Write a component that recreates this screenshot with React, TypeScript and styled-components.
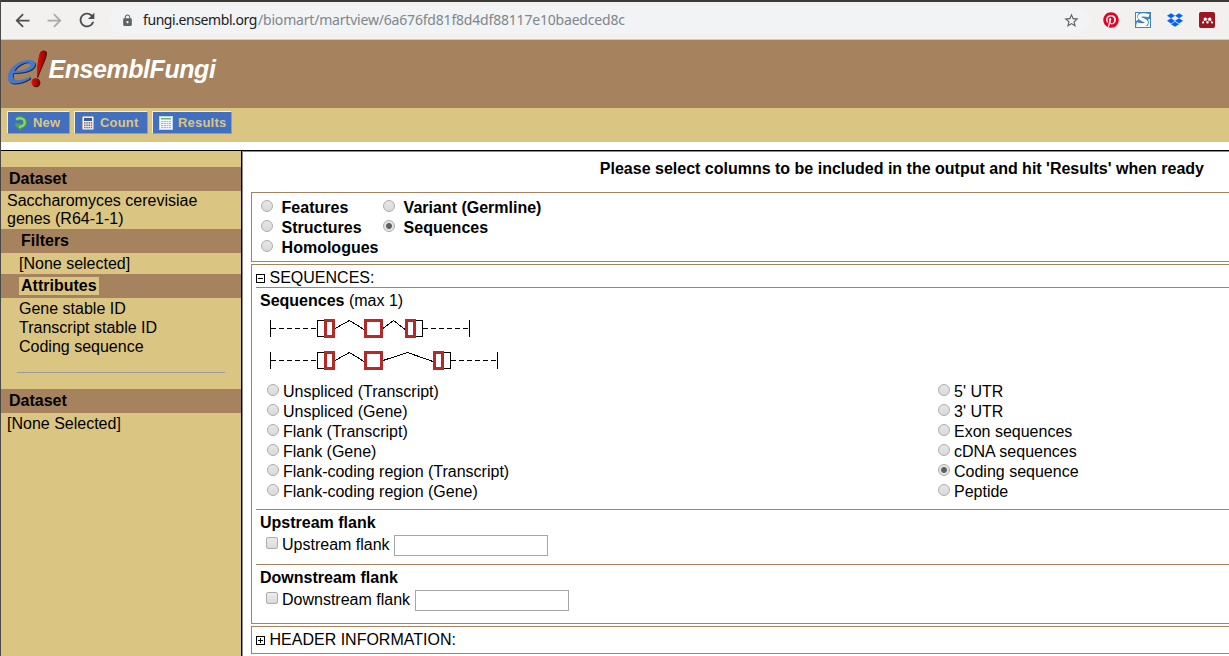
import React from "react";
import styled, { createGlobalStyle } from "styled-components";
import { MdArrowBack, MdArrowForward, MdRefresh, MdLock, MdStarBorder } from "react-icons/md";
import { FaPinterest, FaDropbox, FaMendeley } from "react-icons/fa";

const brown = "#a6835e";
const sand = "#dbc583";

const Global = createGlobalStyle`
  * { box-sizing: border-box; }
  body { margin: 0; background: #fff; overflow: hidden; }
`;

const Page = styled.div`
  width: 1229px;
  height: 656px;
  overflow: hidden;
  display: flex;
  flex-direction: column;
  border-left: 1px solid #4a4945;
  background: #fff;
  color: #000;
  font: 16px/18px "Liberation Sans", Arial, sans-serif;
  white-space: nowrap;
`;

const BrowserBar = styled.div`
  flex: none;
  height: 40px;
  display: flex;
  align-items: center;
  padding-bottom: 1px;
  border-top: 2px solid #3c3b37;
  border-bottom: 1px solid #cfcdca;
  background: #f2f1f0;
  color: #4c4d50;
`;

const NavIcons = styled.div`
  display: flex;
  align-items: center;
  gap: 11px;
  width: 109px;
  padding-left: 11px;
  svg { flex: none; }
  svg:nth-child(2) { color: #a9a9a9; }
`;

const Omnibox = styled.div`
  width: 979px;
  height: 28px;
  padding: 0 9.5px 0 10.5px;
  border-radius: 14px;
  display: flex;
  align-items: center;
  background: #f1f3f4;
  color: #5f6368;
`;

const Url = styled.div`
  flex: 1;
  margin-left: 9.5px;
  font: 14px/20px "Noto Sans", sans-serif;
  color: #80868b;
`;

const Host = styled.span`
  display: inline-block;
  width: 115px;
  letter-spacing: -0.42px;
  color: #202124;
`;

const Path = styled.span`
  letter-spacing: -0.19px;
`;

const Extensions = styled.div`
  display: flex;
  align-items: center;
  gap: 16px;
  margin-left: 14px;
`;

const MendeleyBadge = styled.span`
  width: 16px;
  height: 16px;
  border-radius: 2px;
  display: flex;
  align-items: center;
  justify-content: center;
  background: #9d1620;
  color: #fff;
`;

const Header = styled.header`
  flex: none;
  height: 68px;
  display: flex;
  align-items: flex-start;
  padding: 9px 0 0 4px;
  background: ${brown};
`;

const Brand = styled.div`
  margin: 5px 0 0 1.5px;
  font-size: 25px;
  font-weight: bold;
  font-style: italic;
  line-height: 30px;
  letter-spacing: -0.44px;
  color: #fff;
`;

const Toolbar = styled.div`
  flex: none;
  height: 34px;
  display: flex;
  align-items: flex-start;
  gap: 4px;
  padding: 3px 0 0 6px;
  background: ${sand};
`;

const ToolButton = styled.button<{ $width: number }>`
  width: ${(p) => p.$width}px;
  height: 23px;
  padding: 0 0 0 6px;
  display: flex;
  align-items: center;
  gap: 5px;
  border: 1px solid;
  border-color: #f4eed8 #9d9a9a #9d9a9a #f4eed8;
  background: #436fc0;
  color: ${sand};
  font: bold 13px/16px "Liberation Sans", Arial, sans-serif;
  letter-spacing: 0.2px;
  svg { flex: none; }
`;

const Body = styled.div`
  flex: 1;
  min-height: 0;
  display: flex;
  margin-top: 8px;
  border-top: 1px solid #000;
`;

const Sidebar = styled.aside`
  flex: none;
  width: 241px;
  padding-top: 16px;
  border-right: 1px solid #000;
  background: ${sand};
`;

const SideHeading = styled.div<{ $nested?: boolean }>`
  height: 24px;
  padding-left: ${(p) => (p.$nested ? 18 : 8)}px;
  display: flex;
  align-items: center;
  background: ${brown};
  font-weight: bold;
`;

const HeadingLabel = styled.span<{ $active?: boolean }>`
  height: 18px;
  line-height: 18px;
  padding: 0 2px;
  background: ${(p) => (p.$active ? sand : "transparent")};
`;

const SideTitle = styled.span`
  line-height: 24px;
`;

const SideValue = styled.div`
  padding: 1px 0 1px 6px;
`;

const SideEmpty = styled(SideValue)`
  padding-top: 2px;
`;

const SideItem = styled.div<{ $height: number }>`
  height: ${(p) => p.$height}px;
  line-height: ${(p) => p.$height}px;
  padding-left: 18px;
`;

const SideRule = styled.div`
  width: 208px;
  height: 1px;
  margin: 16px 0 16px 16px;
  background: #9b9b9b;
`;

const SideList = styled.div`
  padding-top: 1px;
`;

const Main = styled.main`
  flex: 1;
  min-width: 0;
  border-left: 1px solid #8c8c8c;
  border-top: 1px solid #8c8c8c;
  padding-left: 8px;
`;

const Hint = styled.div`
  height: 40px;
  padding: 8px 25px 0 0;
  text-align: right;
  font-weight: bold;
`;

const Panel = styled.section<{ $height: number }>`
  height: ${(p) => p.$height}px;
  margin-bottom: 2px;
  border: 1px solid ${brown};
  border-right: 0;
  padding-left: 4px;
`;

const PageTypes = styled.div`
  display: grid;
  grid-template-columns: 122px auto;
  grid-auto-rows: 20px;
  justify-content: start;
  padding: 4px 0 0 5px;
  font-weight: bold;
`;

const Option = styled.label<{ $gap: number }>`
  height: 20px;
  display: flex;
  align-items: flex-start;
  gap: ${(p) => p.$gap}px;
  line-height: 22px;
`;

const Radio = styled.input.attrs({ type: "radio", readOnly: true })`
  appearance: none;
  flex: none;
  width: 12px;
  height: 12px;
  margin: 3px 0 0;
  border: 1px solid #adadad;
  border-radius: 50%;
  background: linear-gradient(#e6e6e6, #dadada);
  &:checked {
    background: radial-gradient(circle, #606060 0 2.5px, #e4e4e4 3.4px);
  }
`;

const Checkbox = styled.input.attrs({ type: "checkbox" })`
  appearance: none;
  flex: none;
  width: 12px;
  height: 12px;
  margin: 2px 4px 0 0;
  border: 1px solid #adadad;
  border-radius: 2px;
  background: linear-gradient(#ececec, #dadada);
`;

const PanelTitle = styled.div<{ $ruled?: boolean }>`
  height: 23px;
  display: flex;
  align-items: flex-start;
  gap: 4.5px;
  border-bottom: ${(p) => (p.$ruled ? `1px solid ${brown}` : "0")};
  line-height: 26px;
`;

const ToggleIcon = styled.svg`
  margin-top: 9px;
`;

const SequenceBlock = styled.div`
  height: 222px;
  padding: 4px 0 0 4px;
  border-bottom: 1px solid ${brown};
`;

const Diagram = styled.svg`
  display: block;
  margin: 5px 0 6px;
`;

const SequenceTypes = styled.div`
  display: grid;
  grid-template-columns: 671px auto;
  justify-content: start;
  padding-left: 7px;
`;

const Flank = styled.div<{ $ruled?: boolean }>`
  height: 55px;
  padding: 4px 0 0 4px;
  border-bottom: ${(p) => (p.$ruled ? `1px solid ${brown}` : "0")};
`;

const FlankRow = styled.label`
  height: 21px;
  margin-top: 3px;
  padding-left: 6px;
  display: flex;
  align-items: flex-start;
  line-height: 20px;
`;

const TextField = styled.input<{ $gap: number }>`
  width: 154px;
  height: 21px;
  margin-left: ${(p) => p.$gap}px;
  padding: 0 4px;
  border: 1px solid #a6a6a6;
  background: #fff;
`;

function EnsemblMark() {
  const letter =
    "M2.800 28C3.500 18.500 14 11 24 11C29.500 11 31.500 14 29.300 17.800C26.500 22.300 17 24.200 8.300 24.200C7 29 9 31.800 14 31.200C18 30.700 22 29.200 25 27.300C25.500 28.300 25.500 28.800 25 29.600C20 33 14 34.700 9.500 34.600C5 34.400 2.500 32 2.800 28ZM9.300 21.900C17 21.600 24.300 19.700 25.300 16.200C26 13 22 12.800 18.500 14.300C14 16 11 19 9.300 21.900Z";
  return (
    <svg width="42" height="40" viewBox="0 0 42 40">
      <defs>
        <linearGradient id="red" x1="0" x2="1">
          <stop offset="0" stopColor="#e01010" />
          <stop offset="1" stopColor="#8d0000" />
        </linearGradient>
      </defs>
      <g fillRule="evenodd">
        <path d={letter} fill="#1f3050" transform="translate(.9 .9)" />
        <path d={letter} fill="#4678cc" />
      </g>
      <path d="M35 4.500C36.500 .8 42.500 .5 42 5C41.500 10 36.500 19 33.300 28.500H32C32.200 19 33 11 35 4.500Z" fill="#3c1510" />
      <path d="M34.800 4.200C36.300 .5 41.500 .5 41 4.500C40.500 10 35.500 19 32.600 27.500H31.900C31.900 19 32.500 11 34.800 4.200Z" fill="url(#red)" />
      <circle cx="31.200" cy="34" r="4.200" fill="#3c1510" />
      <circle cx="30.600" cy="33.300" r="4.100" fill="url(#red)" />
    </svg>
  );
}

function NewIcon() {
  return (
    <svg width="14" height="16" viewBox="0 0 14 16">
      <path d="M2 4.500C4.500 1.800 11.200 2.600 11.100 7.600C11 10.300 8.500 11.800 5.500 11.900" fill="none" stroke="#3f9a45" strokeWidth="4.200" />
      <path d="M.6 8.300H6.800V10.300H5L6.800 12V15.800L1.200 10.800Z" fill="#4ea64b" />
      <path d="M2.200 4.500C4.800 2.300 10.900 3 10.700 7.600C10.500 10 8 11.600 5 11.800" fill="none" stroke="#8fd07f" strokeWidth="2.300" />
    </svg>
  );
}

function CountIcon() {
  return (
    <svg width="14" height="16" viewBox="0 0 14 16">
      <rect x="1.500" y="1.500" width="11" height="13" rx="1" fill="#f3f1ef" stroke="#b8b4b2" />
      <rect x="3" y="3" width="8" height="3" fill="#365d9b" />
      {[7.2, 9.5, 11.8].map((y) =>
        [3.1, 5.3, 7.5, 9.7].map((x) => (
          <rect key={`${x}-${y}`} x={x} y={y} width="1.500" height="1.500" fill={x > 9 && y < 8 ? "#c8503e" : "#777"} />
        ))
      )}
    </svg>
  );
}

function ResultsIcon() {
  return (
    <svg width="14" height="16" viewBox="0 0 14 16">
      <rect x=".5" y="1.500" width="13" height="13" fill="#fff" stroke="#b9d9f7" />
      <rect x="2" y="3" width="10" height="1.500" fill="#69b667" />
      {[6, 8, 10, 12].map((y) =>
        [2, 5, 7.5, 10].map((x) => (
          <rect key={`${x}-${y}`} x={x} y={y} width={x === 2 ? 2.5 : 2} height="1.200" fill="#94bbed" />
        ))
      )}
    </svg>
  );
}

function StylishIcon() {
  return (
    <svg width="16" height="16" viewBox="0 0 16 16">
      <rect width="16" height="16" fill="#3f86b5" />
      <path d="M1 1H4C1.800 2.500 1.800 6 3.500 7.500L1 9ZM1 14H15V15H1ZM13 7.500L15 7V15H11C14 13.500 14.500 10 13 7.500Z" fill="#fff" />
      <path d="M14 3.800C10 2.300 4.500 2.300 4.500 4.900C4.500 7.900 11.300 7.300 11.300 10.600C11.300 13.600 5.500 13.300 1.500 11.900" fill="none" stroke="#fff" strokeWidth="3.300" />
    </svg>
  );
}

function Toggle({ open }: { open?: boolean }) {
  return (
    <ToggleIcon width="9" height="9" viewBox="0 0 9 9" shapeRendering="crispEdges">
      <rect x=".5" y=".5" width="8" height="8" fill="#fff" stroke="#000" />
      <path d={open ? "M2 4.500H7" : "M2 4.500H7M4.500 2V7"} stroke="#000" />
    </ToggleIcon>
  );
}

/* One transcript: x positions are relative to the left edge of the drawing. */
function Transcript({ y, last }: { y: number; last: number }) {
  const mid = Math.round((123 + last) / 2) - 1;
  return (
    <g transform={`translate(0 ${y})`} fill="none" stroke="#000">
      <g shapeRendering="crispEdges">
        <path d={`M10.500 1V18M${last + 64.5} 1V18`} />
        <path d={`M11 9.500H57M${last + 18} 9.500H${last + 64}`} strokeDasharray="5 3" />
        <rect x="57.500" y="1.500" width="10" height="16" />
        <rect x={last + 7.5} y="1.500" width="10" height="16" />
        <path d={`M75 9.500L89.500 1.500L104 10.500M123 9.500L${mid + 0.5} 1.500L${last} 10.500`} />
      </g>
      <g fill="#fff" stroke="#b22a2a" strokeWidth="3" shapeRendering="crispEdges">
        <rect x="65.500" y="1.500" width="8" height="16" />
        <rect x="105.500" y="1.500" width="16" height="16" />
        <rect x={last + 1.5} y="1.500" width="8" height="16" />
      </g>
    </g>
  );
}

const pageTypes = ["Features", "Variant (Germline)", "Structures", "Sequences", "Homologues"];

const sequenceTypes = [
  "Unspliced (Transcript)", "5' UTR",
  "Unspliced (Gene)", "3' UTR",
  "Flank (Transcript)", "Exon sequences",
  "Flank (Gene)", "cDNA sequences",
  "Flank-coding region (Transcript)", "Coding sequence",
  "Flank-coding region (Gene)", "Peptide",
];

export default function App() {
  return (
    <Page>
      <Global />
      <BrowserBar>
        <NavIcons>
          <MdArrowBack size={21} />
          <MdArrowForward size={21} />
          <MdRefresh size={22} />
        </NavIcons>
        <Omnibox>
          <MdLock size={13} />
          <Url>
            <Host>fungi.ensembl.org</Host>
            <Path>/biomart/martview/6a676fd81f8d4df88117e10baedced8c</Path>
          </Url>
          <MdStarBorder size={17} />
        </Omnibox>
        <Extensions>
          <FaPinterest size={16} color="#e60023" />
          <StylishIcon />
          <FaDropbox size={16} color="#0061ff" />
          <MendeleyBadge>
            <FaMendeley size={11} />
          </MendeleyBadge>
        </Extensions>
      </BrowserBar>

      <Header>
        <EnsemblMark />
        <Brand>EnsemblFungi</Brand>
      </Header>

      <Toolbar>
        <ToolButton $width={63}><NewIcon />New</ToolButton>
        <ToolButton $width={74}><CountIcon />Count</ToolButton>
        <ToolButton $width={80}><ResultsIcon />Results</ToolButton>
      </Toolbar>

      <Body>
        <Sidebar>
          <SideHeading><SideTitle>Dataset</SideTitle></SideHeading>
          <SideValue>Saccharomyces cerevisiae<br />genes (R64-1-1)</SideValue>
          <SideHeading $nested><HeadingLabel>Filters</HeadingLabel></SideHeading>
          <SideItem $height={21}>[None selected]</SideItem>
          <SideHeading $nested><HeadingLabel $active>Attributes</HeadingLabel></SideHeading>
          <SideList>
            <SideItem $height={19}>Gene stable ID</SideItem>
            <SideItem $height={19}>Transcript stable ID</SideItem>
            <SideItem $height={19}>Coding sequence</SideItem>
          </SideList>
          <SideRule />
          <SideHeading><SideTitle>Dataset</SideTitle></SideHeading>
          <SideEmpty>[None Selected]</SideEmpty>
        </Sidebar>

        <Main>
          <Hint>Please select columns to be included in the output and hit 'Results' when ready</Hint>

          <Panel $height={70}>
            <PageTypes>
              {pageTypes.map((name) => (
                <Option key={name} $gap={8.6}>
                  <Radio name="page" checked={name === "Sequences"} />
                  {name}
                </Option>
              ))}
            </PageTypes>
          </Panel>

          <Panel $height={360}>
            <PanelTitle $ruled><Toggle open />SEQUENCES:</PanelTitle>
            <SequenceBlock>
              <div><b>Sequences</b> (max 1)</div>
              <Diagram width="250" height="60" viewBox="0 0 250 60">
                <Transcript y={4} last={145} />
                <Transcript y={36} last={173} />
              </Diagram>
              <SequenceTypes>
                {sequenceTypes.map((name) => (
                  <Option key={name} $gap={4}>
                    <Radio name="sequence" checked={name === "Coding sequence"} />
                    {name}
                  </Option>
                ))}
              </SequenceTypes>
            </SequenceBlock>
            <Flank $ruled>
              <b>Upstream flank</b>
              <FlankRow><Checkbox />Upstream flank<TextField $gap={4.4} /></FlankRow>
            </Flank>
            <Flank>
              <b>Downstream flank</b>
              <FlankRow><Checkbox />Downstream flank<TextField $gap={5} /></FlankRow>
            </Flank>
          </Panel>

          <Panel $height={28}>
            <PanelTitle><Toggle />HEADER INFORMATION:</PanelTitle>
          </Panel>
        </Main>
      </Body>
    </Page>
  );
}
